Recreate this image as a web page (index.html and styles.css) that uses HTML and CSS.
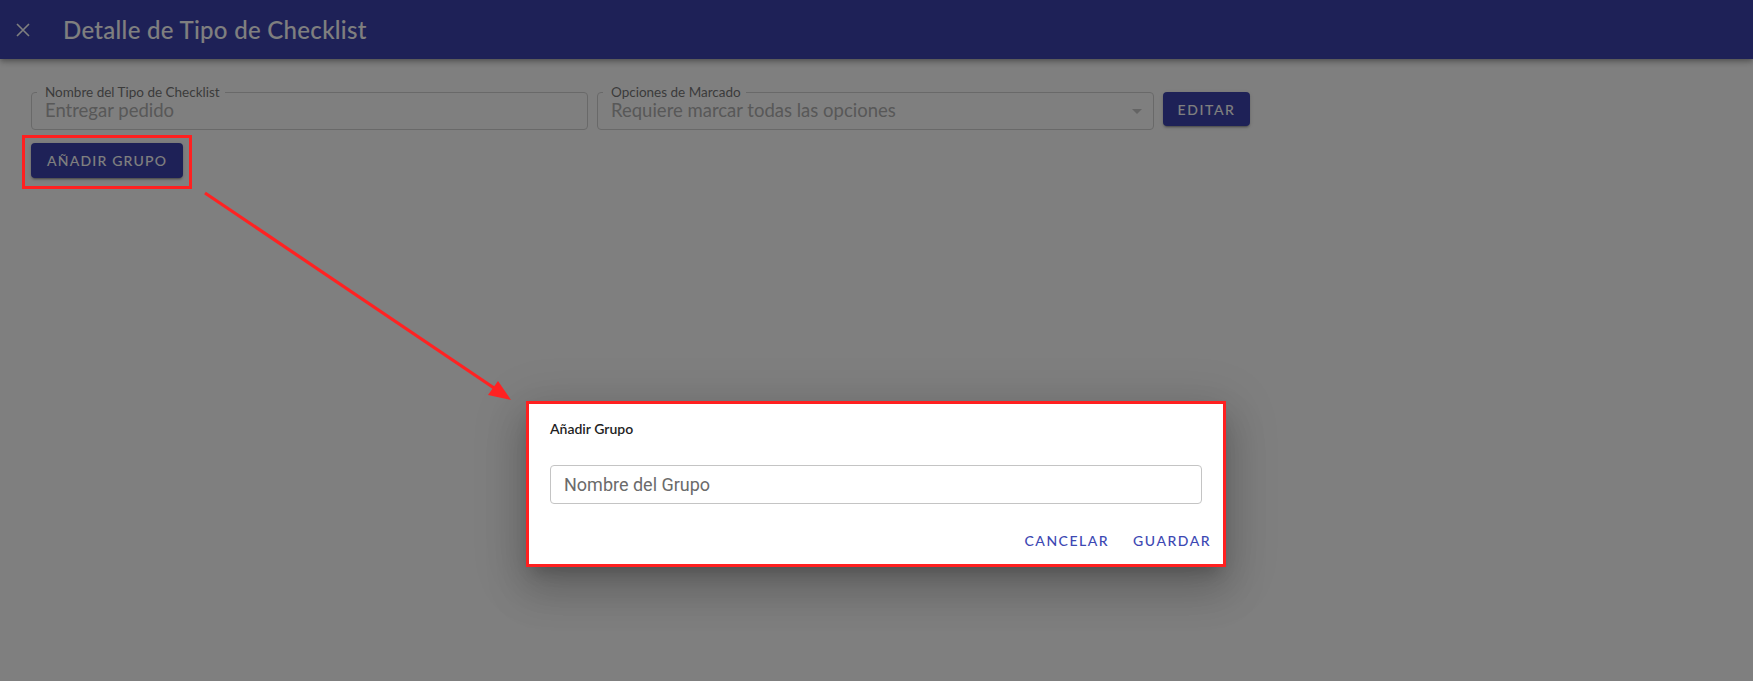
FILE: index.html
```html
<!DOCTYPE html>
<html lang="es">
<head>
    <meta charset="UTF-8">
    <meta name="viewport" content="width=device-width, initial-scale=1.0">
    <title>Detalle de Tipo de Checklist</title>
    <link rel="stylesheet" href="styles.css">
</head>
<body>
    <header class="topbar">
        <button class="close-btn" aria-label="Cerrar">
            <svg width="14" height="14" viewBox="0 0 14 14">
                <path d="M1 1L13 13M13 1L1 13" stroke="#fff" stroke-width="1.6" fill="none"/>
            </svg>
        </button>
        <h1 class="title">Detalle de Tipo de Checklist</h1>
    </header>

    <main class="content">
        <div class="row">
            <fieldset class="field">
                <legend>Nombre del Tipo de Checklist</legend>
                <div class="value">Entregar pedido</div>
            </fieldset>
            <fieldset class="field">
                <legend>Opciones de Marcado</legend>
                <div class="value">Requiere marcar todas las opciones</div>
                <svg class="caret" width="10" height="5" viewBox="0 0 10 5">
                    <path d="M0 0L5 5L10 0Z" fill="#c8c8c8"/>
                </svg>
            </fieldset>
            <button class="btn edit-btn">Editar</button>
        </div>
        <button class="btn add-btn">Añadir grupo</button>
    </main>

    <div class="backdrop"></div>

    <div class="dialog">
        <h2 class="dialog-title">Añadir Grupo</h2>
        <input class="dialog-input" type="text" placeholder="Nombre del Grupo">
        <div class="dialog-actions">
            <button class="text-btn">Cancelar</button>
            <button class="text-btn">Guardar</button>
        </div>
    </div>

    <!-- annotations -->
    <div class="mark-box"></div>
    <svg class="arrow" width="1753" height="681">
        <line x1="205" y1="193" x2="500" y2="392" stroke="#ff2222" stroke-width="3.2"/>
        <polygon points="511,400 488,395 498,381" fill="#ff2222"/>
    </svg>
</body>
</html>
```

FILE: styles.css
```css
body {
    margin: 0;
    font-family: "Lato", "Liberation Sans", sans-serif;
    background: #fff;
    width: 1753px;
    height: 681px;
    overflow: hidden;
    position: relative;
}

.topbar {
    height: 59px;
    background: #3c43ae;
    display: flex;
    align-items: center;
    padding-left: 16px;
    box-shadow: 0 2px 4px -1px rgba(0,0,0,.2), 0 4px 5px 0 rgba(0,0,0,.14), 0 1px 10px 0 rgba(0,0,0,.12);
}

.close-btn {
    background: none;
    border: none;
    padding: 0;
    width: 14px;
    height: 14px;
    display: flex;
    margin-top: 1px;
}

.title {
    margin: 0 0 0 33px;
    color: #fff;
    font-size: 24px;
    font-weight: 500;
    letter-spacing: 0.3px;
}

.content {
    padding: 26px 0 0 31px;
}

.row {
    display: flex;
    align-items: flex-start;
    gap: 9px;
}

.field {
    position: relative;
    width: 557px;
    height: 45px;
    box-sizing: border-box;
    margin: 0;
    padding: 0 13px;
    border: 1px solid #d2d2d2;
    border-radius: 4px;
}

.field legend {
    margin-left: -8px;
    padding: 0 5px 0 8px;
    font-size: 13.5px;
    line-height: 14px;
    color: #777;
}

.value {
    font-size: 18.5px;
    color: #b0b0b0;
    line-height: 22px;
}

.caret {
    position: absolute;
    right: 11px;
    top: 10px;
}

.btn {
    font-family: "Lato", "Liberation Sans", sans-serif;
    background: #3c43ae;
    color: #fff;
    border: none;
    border-radius: 4px;
    font-size: 14px;
    font-weight: 500;
    letter-spacing: 1.2px;
    text-transform: uppercase;
    box-shadow: 0 3px 1px -2px rgba(0,0,0,.2), 0 2px 2px 0 rgba(0,0,0,.14), 0 1px 5px 0 rgba(0,0,0,.12);
}

.edit-btn {
    margin-top: 7px;
    width: 87px;
    height: 34px;
    padding: 0;
    letter-spacing: 1.6px;
}

.add-btn {
    margin-top: 13px;
    height: 35px;
    padding: 0 16px;
}

.backdrop {
    position: absolute;
    inset: 0;
    background: rgba(0,0,0,.5);
}

.dialog {
    position: absolute;
    top: 401px;
    left: 526px;
    width: 700px;
    height: 166px;
    box-sizing: border-box;
    border: 3px solid #ff2020;
    background: #fff;
    padding: 15px 21px 0 21px;
    box-shadow: 0 11px 15px -7px rgba(0,0,0,.2), 0 24px 38px 3px rgba(0,0,0,.14), 0 9px 46px 8px rgba(0,0,0,.12);
}

.dialog-title {
    margin: 0;
    font-size: 14px;
    line-height: 20px;
    font-weight: 600;
    color: #1f1f1f;
    letter-spacing: 0;
}

.dialog-input {
    display: block;
    margin-top: 26px;
    width: 100%;
    height: 39px;
    box-sizing: border-box;
    border: 1px solid #c4c4c4;
    border-radius: 4px;
    padding: 0 13px;
    font-family: "Roboto", "Liberation Sans", sans-serif;
    font-size: 18px;
    outline: none;
}

.dialog-input::placeholder {
    color: #6b6b6b;
}

.dialog-actions {
    display: flex;
    justify-content: flex-end;
    gap: 8px;
    margin-top: 20px;
    margin-right: -17px;
}

.text-btn {
    background: none;
    border: none;
    font-family: "Lato", "Liberation Sans", sans-serif;
    font-size: 14px;
    font-weight: 500;
    letter-spacing: 1.5px;
    text-transform: uppercase;
    color: #3d48b3;
    padding: 8px 8px;
}

.mark-box {
    position: absolute;
    left: 22px;
    top: 135px;
    width: 164px;
    height: 48px;
    border: 3px solid #ff2020;
}

.arrow {
    position: absolute;
    left: 0;
    top: 0;
}
```
